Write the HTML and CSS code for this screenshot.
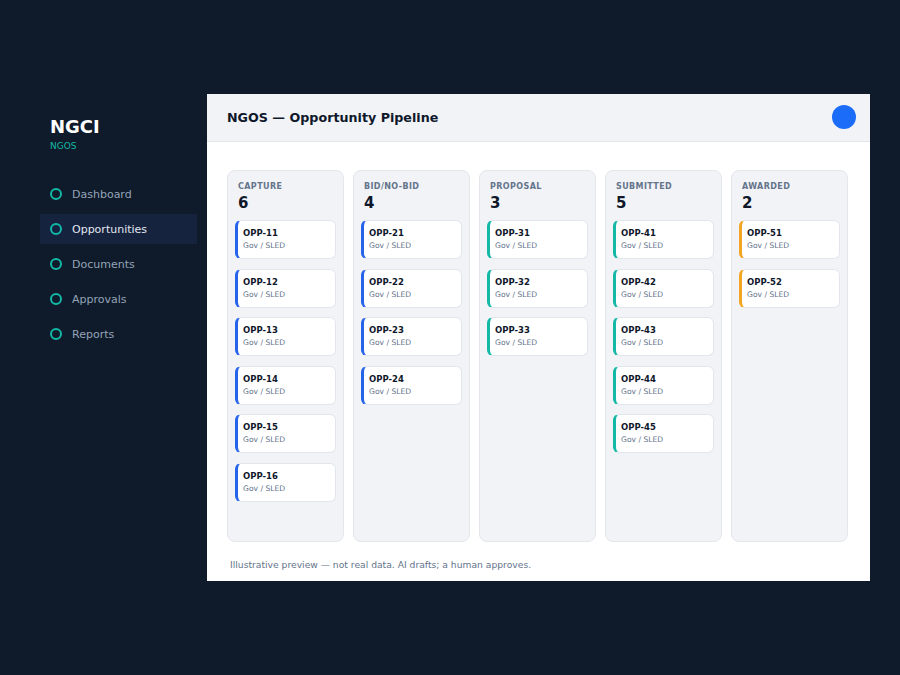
FILE: index.html
```html
<!DOCTYPE html>
<html lang="en">
<head>
    <meta charset="UTF-8">
    <meta name="viewport" content="width=device-width, initial-scale=1.0">
    <title>NGOS — Opportunity Pipeline</title>
    <link rel="stylesheet" href="styles.css">
</head>
<body>
    <div class="app">
        <!-- sidebar -->
        <div class="sidebar">
            <div class="brand">
                <div class="brand_name">NGCI</div>
                <div class="brand_sub">NGOS</div>
            </div>
            <div class="nav">
                <div class="nav_item"><span class="dot"></span>Dashboard</div>
                <div class="nav_item active"><span class="dot"></span>Opportunities</div>
                <div class="nav_item"><span class="dot"></span>Documents</div>
                <div class="nav_item"><span class="dot"></span>Approvals</div>
                <div class="nav_item"><span class="dot"></span>Reports</div>
            </div>
        </div>

        <!-- main -->
        <div class="main">
            <div class="topbar">
                <h1 class="title">NGOS — Opportunity Pipeline</h1>
                <div class="avatar"></div>
            </div>

            <div class="board">
                <div class="col">
                    <div class="col_label">CAPTURE</div>
                    <div class="col_count">6</div>
                    <div class="card blue"><b>OPP-11</b><span>Gov / SLED</span></div>
                    <div class="card blue"><b>OPP-12</b><span>Gov / SLED</span></div>
                    <div class="card blue"><b>OPP-13</b><span>Gov / SLED</span></div>
                    <div class="card blue"><b>OPP-14</b><span>Gov / SLED</span></div>
                    <div class="card blue"><b>OPP-15</b><span>Gov / SLED</span></div>
                    <div class="card blue"><b>OPP-16</b><span>Gov / SLED</span></div>
                </div>
                <div class="col">
                    <div class="col_label">BID/NO-BID</div>
                    <div class="col_count">4</div>
                    <div class="card blue"><b>OPP-21</b><span>Gov / SLED</span></div>
                    <div class="card blue"><b>OPP-22</b><span>Gov / SLED</span></div>
                    <div class="card blue"><b>OPP-23</b><span>Gov / SLED</span></div>
                    <div class="card blue"><b>OPP-24</b><span>Gov / SLED</span></div>
                </div>
                <div class="col">
                    <div class="col_label">PROPOSAL</div>
                    <div class="col_count">3</div>
                    <div class="card teal"><b>OPP-31</b><span>Gov / SLED</span></div>
                    <div class="card teal"><b>OPP-32</b><span>Gov / SLED</span></div>
                    <div class="card teal"><b>OPP-33</b><span>Gov / SLED</span></div>
                </div>
                <div class="col">
                    <div class="col_label">SUBMITTED</div>
                    <div class="col_count">5</div>
                    <div class="card teal"><b>OPP-41</b><span>Gov / SLED</span></div>
                    <div class="card teal"><b>OPP-42</b><span>Gov / SLED</span></div>
                    <div class="card teal"><b>OPP-43</b><span>Gov / SLED</span></div>
                    <div class="card teal"><b>OPP-44</b><span>Gov / SLED</span></div>
                    <div class="card teal"><b>OPP-45</b><span>Gov / SLED</span></div>
                </div>
                <div class="col">
                    <div class="col_label">AWARDED</div>
                    <div class="col_count">2</div>
                    <div class="card orange"><b>OPP-51</b><span>Gov / SLED</span></div>
                    <div class="card orange"><b>OPP-52</b><span>Gov / SLED</span></div>
                </div>
            </div>

            <div class="footer">Illustrative preview — not real data. AI drafts; a human approves.</div>
        </div>
    </div>
</body>
</html>
```

FILE: styles.css
```css
* {
    box-sizing: border-box;
    margin: 0;
}

body {
    background-color: #0f1b2a;
    font-family: "DejaVu Sans", sans-serif;
    height: 675px;
    display: flex;
    align-items: center;
    justify-content: center;
}

.app {
    width: 840px;
    height: 487px;
    display: flex;
}

/* sidebar */
.sidebar {
    width: 177px;
    padding: 22px 10px 0 10px;
}

.brand {
    padding-left: 10px;
    margin-bottom: 27px;
}

.brand_name {
    color: #ffffff;
    font-size: 18px;
    font-weight: bold;
    line-height: 22px;
}

.brand_sub {
    color: #14b8a6;
    font-size: 9px;
    line-height: 12px;
    margin-top: 2px;
}

.nav {
    display: flex;
    flex-direction: column;
    gap: 5px;
}

.nav_item {
    height: 30px;
    display: flex;
    align-items: center;
    padding-left: 10px;
    font-size: 11px;
    color: #94a3b8;
}

.nav_item.active {
    background-color: #16233f;
    color: #e2e8f0;
}

.dot {
    width: 12px;
    height: 12px;
    border: 2px solid #14b8a6;
    border-radius: 50%;
    margin-right: 10px;
}

/* main */
.main {
    flex: 1;
    background-color: #ffffff;
    display: flex;
    flex-direction: column;
}

.topbar {
    height: 48px;
    background-color: #f1f3f6;
    border-bottom: 1px solid #e2e5ea;
    display: flex;
    align-items: center;
    justify-content: space-between;
    padding: 0 14px 1px 20px;
}

.title {
    font-size: 12.7px;
    font-weight: bold;
    color: #0f172a;
}

.avatar {
    width: 24px;
    height: 24px;
    border-radius: 50%;
    background-color: #1c6cfa;
}

.board {
    flex: 1;
    display: flex;
    gap: 9px;
    padding: 28px 22px 0 20px;
}

.col {
    flex: 1;
    background-color: #f1f3f6;
    border: 1px solid #e3e6eb;
    border-radius: 8px;
    padding: 11px 7px 0 7px;
}

.col_label {
    font-size: 8px;
    font-weight: bold;
    letter-spacing: 0.4px;
    color: #64748b;
    line-height: 10px;
    padding-left: 3px;
}

.col_count {
    font-size: 15px;
    font-weight: bold;
    color: #0f172a;
    line-height: 18px;
    margin-top: 2px;
    margin-bottom: 8px;
    padding-left: 3px;
}

.card {
    height: 39px;
    background-color: #ffffff;
    border: 1px solid #e2e6ec;
    border-left: 3px solid #2563eb;
    border-radius: 6px;
    padding: 6px 0 0 5px;
    margin-bottom: 9.6px;
    display: flex;
    flex-direction: column;
}

.card b {
    font-size: 8.5px;
    color: #0f172a;
    line-height: 12px;
}

.card span {
    font-size: 7.6px;
    color: #64748b;
    line-height: 12px;
    margin-top: 1px;
}

.card.blue { border-left-color: #2563eb; }
.card.teal { border-left-color: #14b8a6; }
.card.orange { border-left-color: #f5a524; }

.footer {
    height: 39px;
    padding: 17px 0 0 23px;
    font-size: 9.2px;
    line-height: 12px;
    color: #64748b;
}
```
